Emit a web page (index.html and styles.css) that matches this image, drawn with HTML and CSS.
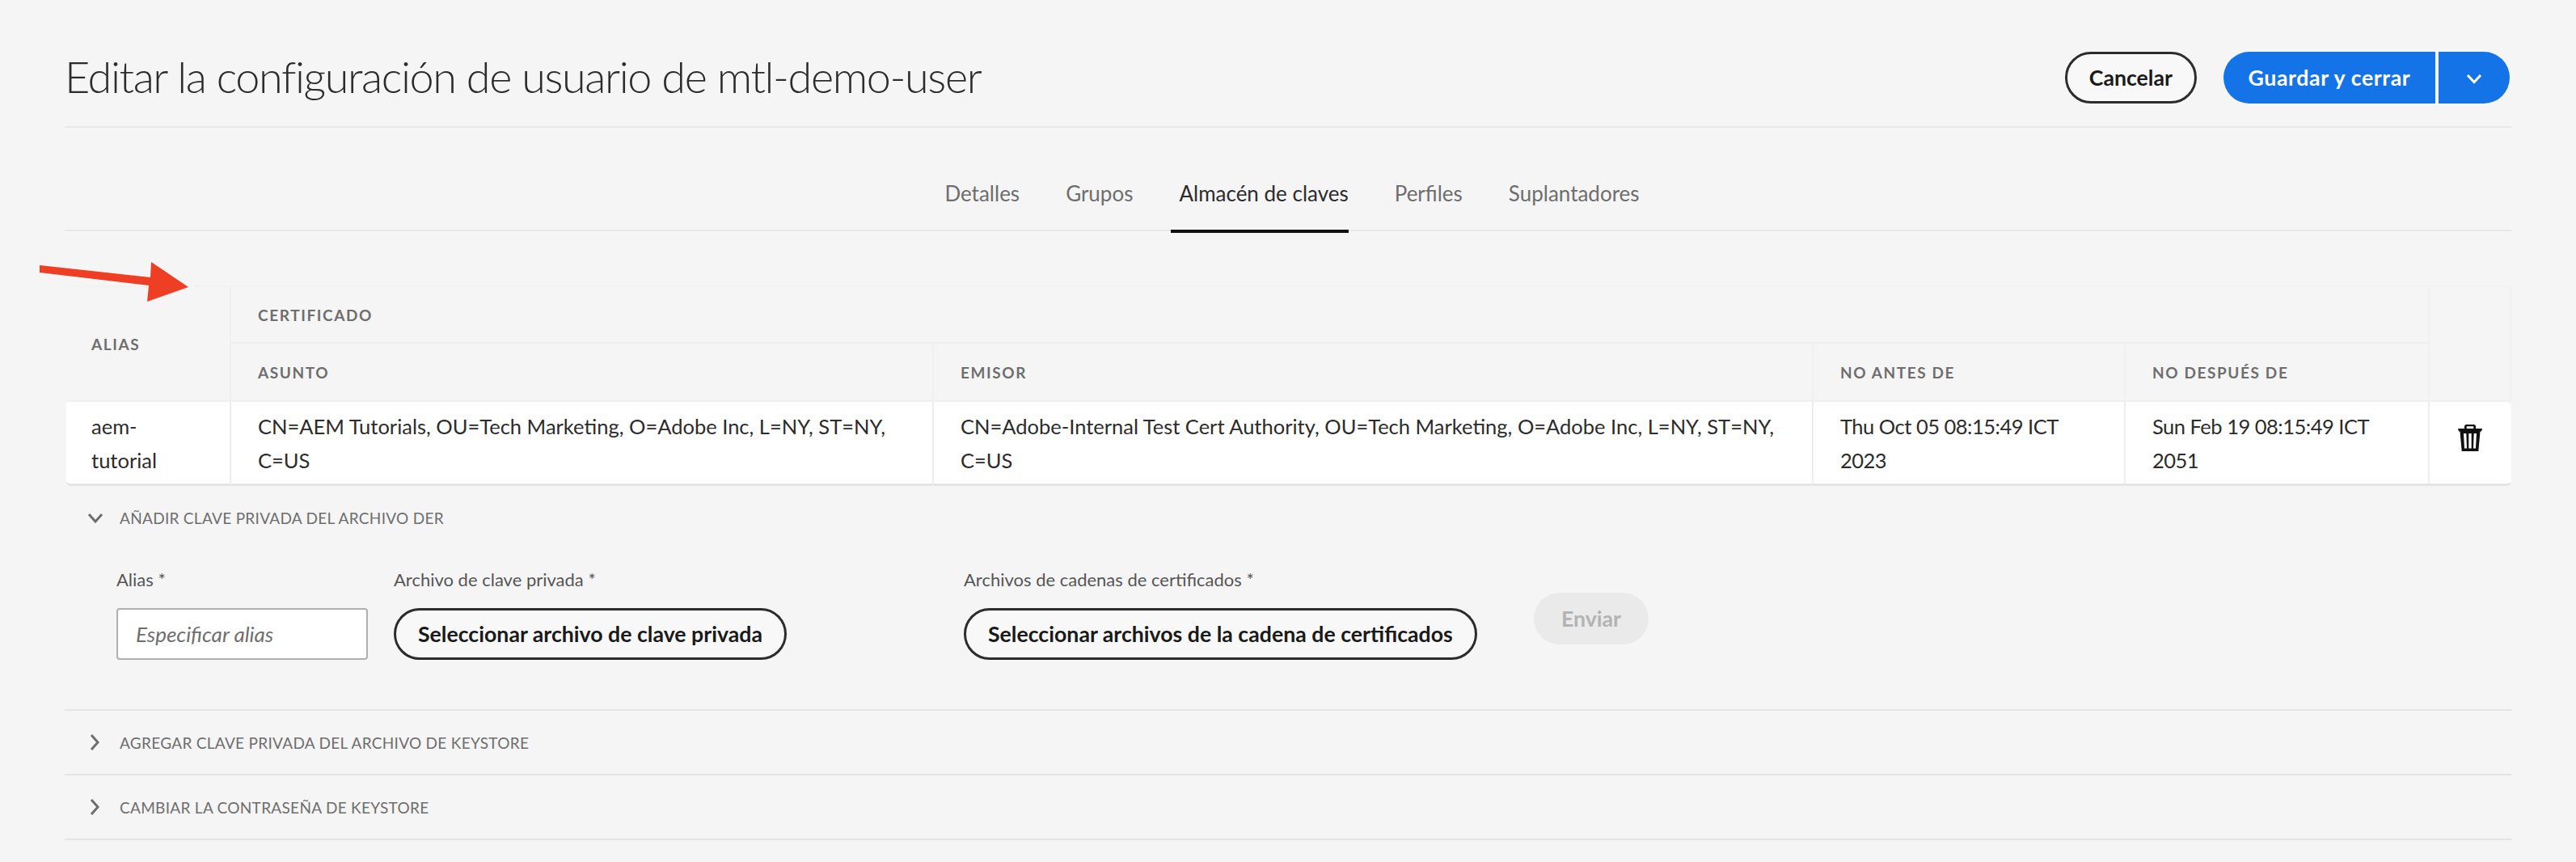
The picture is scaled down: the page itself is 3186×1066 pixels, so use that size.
FILE: index.html
```html
<!DOCTYPE html>
<html lang="es">
	<head>
		<meta charset="utf-8">
		<title>Editar la configuración de usuario de mtl-demo-user</title>
		<link rel="stylesheet" href="styles.css">
	</head>
	<body>
		<div class="content">
			<div class="page_header">
				<h1 class="page_title">Editar la configuración de usuario de mtl-demo-user</h1>
				<div class="actions">
					<button class="btn btn_outline" type="button">Cancelar</button>
					<div class="split_btn">
						<button class="btn btn_primary btn_main" type="button">Guardar y cerrar</button>
						<button class="btn btn_primary btn_more" type="button" aria-label="Más">
							<svg width="20" height="13" viewBox="0 0 20 13"><path d="M2 2l8 8.500L18 2" fill="none" stroke="#fff" stroke-width="3"/></svg>
						</button>
					</div>
				</div>
			</div>

			<div class="tabs">
				<a class="tab" href="#">Detalles</a>
				<a class="tab" href="#">Grupos</a>
				<a class="tab tab_active" href="#">Almacén de claves</a>
				<a class="tab" href="#">Perfiles</a>
				<a class="tab" href="#">Suplantadores</a>
			</div>

			<!--flecha de anotacion sobre la tabla-->
			<svg class="arrow" width="190" height="52" viewBox="0 0 190 52"><path d="M1 4L1 13L136 29L134 49L185 31L139 0L138 19Z" fill="#ee3f24"/></svg>

			<table class="keystore">
				<colgroup>
					<col class="col_alias">
					<col class="col_asunto">
					<col class="col_emisor">
					<col class="col_antes">
					<col class="col_despues">
					<col class="col_acciones">
				</colgroup>
				<thead>
					<tr class="head_top">
						<th class="cell_alias" rowspan="2">Alias</th>
						<th colspan="4">Certificado</th>
						<th rowspan="2"></th>
					</tr>
					<tr class="head_sub">
						<th>Asunto</th>
						<th>Emisor</th>
						<th>No antes de</th>
						<th>No después de</th>
					</tr>
				</thead>
				<tbody>
					<tr>
						<td class="cell_alias">aem-tutorial</td>
						<td>CN=AEM Tutorials, OU=Tech Marketing, O=Adobe Inc, L=NY, ST=NY, C=US</td>
						<td>CN=Adobe-Internal Test Cert Authority, OU=Tech Marketing, O=Adobe Inc, L=NY, ST=NY, C=US</td>
						<td class="cell_date">Thu Oct 05 08:15:49 ICT 2023</td>
						<td class="cell_date">Sun Feb 19 08:15:49 ICT 2051</td>
						<td class="cell_trash">
							<svg class="trash" width="30" height="33" viewBox="0 0 30 33"><path fill="#111" fill-rule="evenodd" d="M10.500 0h9A2.500 2.500 0 0 1 22 2.500V5h8l-1 3.500h-1.500L25.300 33H4.700L2.500 8.500H1L0 5h8V2.500A2.500 2.500 0 0 1 10.500 0zm.2 2.200V5h8.600V2.200zM7 11l1 18.500h3L10.300 11zm6.300 0v18.500h3.400V11zM19.700 11L19 29.500h3L23 11z"/></svg>
						</td>
					</tr>
				</tbody>
			</table>

			<div class="acc_item">
				<div class="acc_head">
					<svg class="acc_icon" width="20" height="13" viewBox="0 0 20 13"><path d="M2 2l8 9 8-9" fill="none" stroke="#6e6e6e" stroke-width="3"/></svg>
					<span>Añadir clave privada del archivo DER</span>
				</div>
				<div class="acc_body">
					<div class="field field_alias">
						<label>Alias *</label>
						<input class="text_input" type="text" placeholder="Especificar alias">
					</div>
					<div class="field field_clave">
						<label>Archivo de clave privada *</label>
						<button class="btn btn_outline" type="button">Seleccionar archivo de clave privada</button>
					</div>
					<div class="field field_cadena">
						<label>Archivos de cadenas de certificados *</label>
						<button class="btn btn_outline" type="button">Seleccionar archivos de la cadena de certificados</button>
					</div>
					<button class="btn btn_disabled" type="button">Enviar</button>
				</div>
			</div>

			<div class="acc_item">
				<div class="acc_head">
					<svg class="acc_icon" width="20" height="20" viewBox="0 0 20 20"><path d="M5 1l8 9-8 9" fill="none" stroke="#6e6e6e" stroke-width="3"/></svg>
					<span>Agregar clave privada del archivo de keystore</span>
				</div>
			</div>

			<div class="acc_item">
				<div class="acc_head">
					<svg class="acc_icon" width="20" height="20" viewBox="0 0 20 20"><path d="M5 1l8 9-8 9" fill="none" stroke="#6e6e6e" stroke-width="3"/></svg>
					<span>Cambiar la contraseña de keystore</span>
				</div>
			</div>
		</div>
	</body>
</html>
```

FILE: styles.css
```css
body{
	margin: 0;
	background: #f5f5f5;
	color: #2c2c2c;
	font-family: "Lato", "Liberation Sans", sans-serif;
}

.content{
	position: relative;
	width: 3026px;
	margin-left: 80px;
}

/*cabecalho*/
.page_header{
	display: flex;
	justify-content: space-between;
	align-items: flex-start;
	height: 158px;
	padding-top: 64px;
	box-sizing: border-box;
	border-bottom: 2px solid #e8e8e8;
}

.page_title{
	margin: 0;
	font-size: 54px;
	font-weight: 300;
	letter-spacing: -1.4px;
	line-height: 62px;
	color: #2c2c2c;
}

.actions{
	display: flex;
	gap: 33px;
	margin-right: 2px;
}

.btn{
	height: 64px;
	padding: 0 27px;
	border-radius: 32px;
	font-family: inherit;
	font-size: 26.700px;
	font-weight: 700;
	box-sizing: border-box;
}

.btn_outline{
	border: 3px solid #2c2c2c;
	background: #f8f8f8;
	color: #1a1a1a;
}

.btn_primary{
	border: 0;
	background: #1473e6;
	color: #fff;
}

.split_btn{
	display: flex;
	gap: 4px;
}

.btn_main{
	width: 262px;
	padding: 0;
	border-radius: 32px 0 0 32px;
	letter-spacing: 0.6px;
}

.btn_more{
	width: 88px;
	padding: 0 0 4px 0;
	border-radius: 0 32px 32px 0;
}

/*abas*/
.tabs{
	display: flex;
	justify-content: center;
	align-items: flex-start;
	gap: 57px;
	height: 128px;
	padding-left: 10px;
	box-sizing: border-box;
	border-bottom: 2px solid #e8e8e8;
}

.tab{
	display: block;
	height: 130px;
	padding-top: 63px;
	box-sizing: border-box;
	font-size: 26px;
	line-height: 36px;
	color: #6e6e6e;
	text-decoration: none;
}

.tab_active{
	margin-left: -10px;
	padding-left: 10px;
	color: #2c2c2c;
	border-bottom: 4px solid #111;
}

/*seta vermelha*/
.arrow{
	position: absolute;
	left: -32px;
	top: 324px;
}

/*tabela do keystore*/
.keystore{
	width: 3024px;
	margin: 67px 0 0 2px;
	table-layout: fixed;
	border-collapse: separate;
	border-spacing: 0;
}

.col_alias{ width: 204px; }
.col_asunto{ width: 869px; }
.col_emisor{ width: 1088px; }
.col_antes{ width: 386px; }
.col_despues{ width: 376px; }
.col_acciones{ width: 101px; }

.keystore th{
	height: 72px;
	padding: 0 0 0 33px;
	box-sizing: border-box;
	border-right: 2px solid #f0f0f0;
	border-bottom: 2px solid #f0f0f0;
	font-size: 19px;
	font-weight: 700;
	letter-spacing: 1.6px;
	text-align: left;
	text-transform: uppercase;
	color: #6e6e6e;
}

.head_top th{
	border-top: 2px solid #f3f3f3;
}

.keystore td{
	padding: 9px 30px 8px 33px;
	background: #fff;
	border-right: 2px solid #ededed;
	border-bottom: 3px solid #e4e4e4;
	font-size: 25.500px;
	line-height: 42px;
	color: #2c2c2c;
}

.keystore .cell_alias{
	padding-left: 31px;
	padding-right: 60px;
}

.keystore td.cell_alias{
	border-radius: 0 0 0 6px;
}

.keystore td.cell_date{
	letter-spacing: -0.5px;
}

.keystore td.cell_trash{
	padding: 28px 0 0 35px;
	vertical-align: top;
	border-right: 0;
	border-radius: 0 6px 6px 0;
}

.trash{
	display: block;
}

/*acordeao*/
.acc_item{
	border-bottom: 2px solid #e4e4e4;
}

.acc_head{
	display: flex;
	align-items: center;
	height: 78px;
	padding-left: 28px;
	font-size: 19px;
	letter-spacing: 0.3px;
	text-transform: uppercase;
	color: #6e6e6e;
}

.acc_icon{
	margin-right: 20px;
}

.acc_body{
	display: flex;
	align-items: flex-start;
	height: 198px;
	padding: 23px 0 0 64px;
	box-sizing: border-box;
}

.field{
	display: flex;
	flex-direction: column;
	gap: 20px;
}

.field label{
	font-size: 22px;
	line-height: 30px;
	color: #555;
}

.field_alias{
	width: 343px;
}

.field_clave{
	width: 705px;
}

.field_cadena{
	width: 705px;
}

.field .btn{
	align-self: flex-start;
	white-space: nowrap;
}

.text_input{
	width: 311px;
	height: 64px;
	padding: 0 22px;
	box-sizing: border-box;
	background: #fff;
	border: 2px solid #b0b0b0;
	border-radius: 4px;
	font-family: inherit;
	font-size: 26px;
}

.text_input::placeholder{
	color: #6e6e6e;
	font-style: italic;
}

.btn_disabled{
	width: 142px;
	margin-top: 31px;
	padding: 0;
	border: 0;
	background: #eaeaea;
	color: #b3b3b3;
}
```
